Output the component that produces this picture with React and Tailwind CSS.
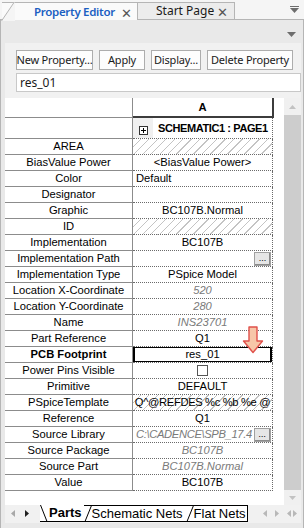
import React from "react";

const rows = [
  { label: "AREA", kind: "hatch" },
  { label: "BiasValue Power", value: "<BiasValue Power>" },
  { label: "Color", value: "Default", align: "left" },
  { label: "Designator", value: "" },
  { label: "Graphic", value: "BC107B.Normal" },
  { label: "ID", kind: "hatch" },
  { label: "Implementation", value: "BC107B" },
  { label: "Implementation Path", value: "", button: true },
  { label: "Implementation Type", value: "PSpice Model" },
  { label: "Location X-Coordinate", value: "520", dim: true },
  { label: "Location Y-Coordinate", value: "280", dim: true },
  { label: "Name", value: "INS23701", dim: true },
  { label: "Part Reference", value: "Q1" },
  { label: "PCB Footprint", value: "res_01", selected: true },
  { label: "Power Pins Visible", kind: "check" },
  { label: "Primitive", value: "DEFAULT" },
  { label: "PSpiceTemplate", value: "Q^@REFDES %c %b %e @", kind: "hatch", tight: true },
  { label: "Reference", value: "Q1" },
  { label: "Source Library", value: "C:\\CADENCE\\SPB_17.4", dim: true, button: true, align: "left", tight: true },
  { label: "Source Package", value: "BC107B", dim: true },
  { label: "Source Part", value: "BC107B.Normal", dim: true },
  { label: "Value", value: "BC107B" },
];

const hatch = {
  backgroundImage:
    "repeating-linear-gradient(135deg, transparent 0 5px, #c4c4c4 5px 6px)",
};

function Caret({ className = "" }) {
  return (
    <svg viewBox="0 0 9 5" className={className}>
      <path d="M0 0h9L4.5 5z" fill="#6d6d6d" />
    </svg>
  );
}

function DotsButton() {
  return (
    <div className="absolute right-[1px] top-[1px] z-10 flex h-[14px] w-[17px] items-end justify-center border border-[#a0a0a0] bg-[#e6e6e6] pb-[2px] text-[9px] leading-none text-black shadow-[inset_-1px_-1px_0_#8a8a8a]">
      ...
    </div>
  );
}

function GridRow({ row }) {
  return (
    <div className="flex h-[16px]">
      <div
        className={`flex w-[127px] items-center justify-center whitespace-nowrap border-b border-[#8c8c8c] text-black ${
          row.selected ? "font-bold" : ""
        }`}
      >
        {row.label}
      </div>
      <div className="w-[1px] bg-[#8c8c8c]" />
      <div
        className={`relative flex w-[140px] items-center overflow-hidden border-b border-r border-dotted border-[#6a6a6a] ${
          row.align === "left" ? "justify-start pl-[3px]" : "justify-center"
        } ${row.dim ? "italic text-[#7a7a7a]" : "text-black"}`}
        style={row.kind === "hatch" ? hatch : undefined}
      >
        {row.selected && (
          <div className="absolute inset-x-0 -top-[1px] -bottom-[1px] border-2 border-black" />
        )}
        {row.kind === "check" ? (
          <div className="h-[11px] w-[11px] border border-[#555] bg-white" />
        ) : (
          <span className={`whitespace-nowrap ${row.tight ? "tracking-[-0.35px]" : ""}`}>
            {row.value}
          </span>
        )}
        {row.button && <DotsButton />}
      </div>
    </div>
  );
}

function Button({ children, w }) {
  return (
    <div
      className={`flex h-[20px] items-center justify-center whitespace-nowrap border border-[#adadad] bg-[#fdfdfd] text-[11px] tracking-[-0.2px] text-[#1a1a1a] ${w}`}
    >
      {children}
    </div>
  );
}

export default function App() {
  return (
    <div
      className="relative h-[528px] w-[304px] overflow-hidden bg-[#f5f5f5]"
      style={{ fontFamily: '"Noto Sans", "Liberation Sans", sans-serif' }}
    >
      {/* document tabs */}
      <div className="relative flex h-[19px] items-end pl-[2px]">
        <div className="relative z-10 -mb-[1px] flex h-[18px] w-[136px] items-center border-r border-t border-[#b5b5b5] bg-[#fafafa] pl-[32px]">
          <svg className="absolute -left-[1px] -top-[1px] h-[19px] w-[14px]" viewBox="0 0 14 19">
            <path d="M0 19L13 0.5H14V19z" fill="#f5f5f5" />
            <path d="M0.5 19L13 0.5" stroke="#b5b5b5" fill="none" />
          </svg>
          <span className="text-[11.5px] font-semibold tracking-[-0.3px] text-[#1c5fc2]">Property Editor</span>
          <span className="absolute right-[5px] top-[1px] text-[13px] text-[#555]">✕</span>
        </div>
        <div className="relative flex h-[17px] w-[97px] items-center border-r border-t border-[#b5b5b5] bg-[#ececec] pl-[18px]">
          <span className="text-[12px] text-[#1a1a1a]">Start Page</span>
          <span className="absolute right-[6px] top-0 text-[13px] text-[#555]">✕</span>
        </div>
        <div className="absolute right-[5px] top-[6px] flex flex-col items-center gap-[1px]">
          <div className="h-[1px] w-[9px] bg-[#6d6d6d]" />
          <Caret className="h-[5px] w-[9px]" />
        </div>
      </div>

      {/* panel */}
      <div className="flex h-[509px] flex-col border-x border-t border-[#b5b5b5] bg-[#e9e9e9]">
        <div className="flex h-[23px] items-center justify-end pr-[7px]">
          <Caret className="mt-[6px] h-[5px] w-[9px]" />
        </div>
        <div className="ml-[4px] mr-[2px] flex h-[480px] flex-col bg-[#f1f1f1]">
          <div className="flex gap-[6px] pl-[11px] pt-[7px]">
            <Button w="w-[77px]">New Property...</Button>
            <Button w="w-[46px]">Apply</Button>
            <Button w="w-[50px]">Display...</Button>
            <Button w="w-[86px]">Delete Property</Button>
          </div>
          <div className="ml-[11px] mt-[3px] flex h-[19px] items-center border border-[#c8c8c8] bg-white pl-[3px] text-[12px] text-[#1a1a1a]">
            res_01
          </div>

          {/* grid */}
          <div
            className="mt-[6px] flex h-[407px] bg-white text-[11.2px]"
            style={{ fontFamily: '"Liberation Sans", Arial, sans-serif' }}
          >
            <div className="flex flex-1 flex-col">
              <div className="flex h-[20px]">
                <div className="w-[127px] border-b border-[#8c8c8c]" />
                <div className="w-[1px] bg-[#8c8c8c]" />
                <div className="flex w-[141px] items-center justify-center border-b-2 border-r-2 border-[#3c3c3c] font-bold">
                  A
                </div>
              </div>
              <div className="flex h-[21px]">
                <div className="w-[127px] border-b border-[#8c8c8c]" />
                <div className="w-[1px] bg-[#8c8c8c]" />
                <div className="flex w-[140px] items-start border-b border-r border-dotted border-[#6a6a6a]">
                  <div className="flex h-full w-[20px] items-center justify-center bg-[#f0f0f0]">
                    <div className="mt-[5px] flex h-[9px] w-[9px] items-center justify-center border border-[#333] bg-white">
                      <svg viewBox="0 0 7 7" className="h-[7px] w-[7px]">
                        <path d="M1 3.5h5M3.5 1v5" stroke="#000" strokeWidth="1" />
                      </svg>
                    </div>
                  </div>
                  <span className="mt-[2px] whitespace-nowrap pl-[5px] text-[11px] font-bold tracking-[-0.4px]">
                    SCHEMATIC1 : PAGE1
                  </span>
                </div>
              </div>
              {rows.map((r) => (
                <GridRow key={r.label} row={r} />
              ))}
            </div>
            {/* scrollbar */}
            <div className="flex w-[17px] flex-col bg-[#cdcdcd]">
              <div className="flex h-[17px] items-center justify-center bg-[#f0f0f0]">
                <svg viewBox="0 0 7 4" className="h-[4px] w-[7px]">
                  <path d="M0 4h7L3.5 0z" fill="#c2c2c2" />
                </svg>
              </div>
              <div className="flex-1" />
              <div className="flex h-[15px] items-center justify-center bg-[#f0f0f0]">
                <svg viewBox="0 0 7 4" className="h-[4px] w-[7px]">
                  <path d="M0 0h7L3.5 4z" fill="#c2c2c2" />
                </svg>
              </div>
            </div>
          </div>

          {/* sheet tabs */}
          <div
            className="flex h-[17px] items-stretch"
            style={{ fontFamily: '"Liberation Sans", Arial, sans-serif' }}
          >
            <div className="flex w-[35px] items-center gap-[10px] pl-[6px]">
              <svg viewBox="0 0 4 7" className="h-[7px] w-[4px]">
                <path d="M4 0v7L0 3.5z" fill="#a8a8a8" />
              </svg>
              <svg viewBox="0 0 4 7" className="h-[7px] w-[4px]">
                <path d="M0 0v7l4-3.5z" fill="#202020" />
              </svg>
            </div>
            <div className="relative flex items-center border-b border-black bg-white pl-[9px] pr-[2px]">
              <svg className="absolute left-0 top-0 h-[17px] w-[8px]" viewBox="0 0 8 17">
                <path d="M0.5 0L7 16.5" stroke="#000" fill="none" />
              </svg>
              <span className="text-[13px] font-bold">Parts</span>
            </div>
            <div className="relative flex items-center border-y border-black bg-white pl-[8px] pr-[3px]">
              <svg className="absolute left-0 top-[-1px] h-[17px] w-[8px]" viewBox="0 0 8 17">
                <path d="M7.5 0.5L1 16.5" stroke="#000" fill="none" />
              </svg>
              <span className="text-[13px]">Schematic Nets</span>
            </div>
            <div className="relative flex items-center border-y border-r border-black bg-white pl-[8px] pr-[1px]">
              <svg className="absolute left-0 top-[-1px] h-[17px] w-[8px]" viewBox="0 0 8 17">
                <path d="M7.5 0.5L1 16.5" stroke="#000" fill="none" />
              </svg>
              <span className="text-[13px]">Flat Nets</span>
            </div>
            <div className="ml-auto flex items-center gap-[8px] pr-[4px]">
              <svg viewBox="0 0 4 7" className="h-[7px] w-[4px]">
                <path d="M4 0v7L0 3.5z" fill="#b8b8b8" />
              </svg>
              <svg viewBox="0 0 4 7" className="h-[7px] w-[4px]">
                <path d="M0 0v7l4-3.5z" fill="#b8b8b8" />
              </svg>
              <svg viewBox="0 0 10 7" className="h-[7px] w-[10px]">
                <path d="M4 0v7L0 3.5zM6 0v7l4-3.5z" fill="#b8b8b8" />
              </svg>
            </div>
          </div>
        </div>
      </div>

      {/* callout arrow over the grid */}
      <svg className="absolute left-[242px] top-[326px] h-[28px] w-[22px]" viewBox="0 0 22 28">
        <path
          d="M7 1h8v14h5.5L11 26.5 1.5 15H7z"
          fill="#f7c6a8"
          stroke="#e0504a"
          strokeWidth="1.4"
          strokeLinejoin="round"
        />
      </svg>
    </div>
  );
}
